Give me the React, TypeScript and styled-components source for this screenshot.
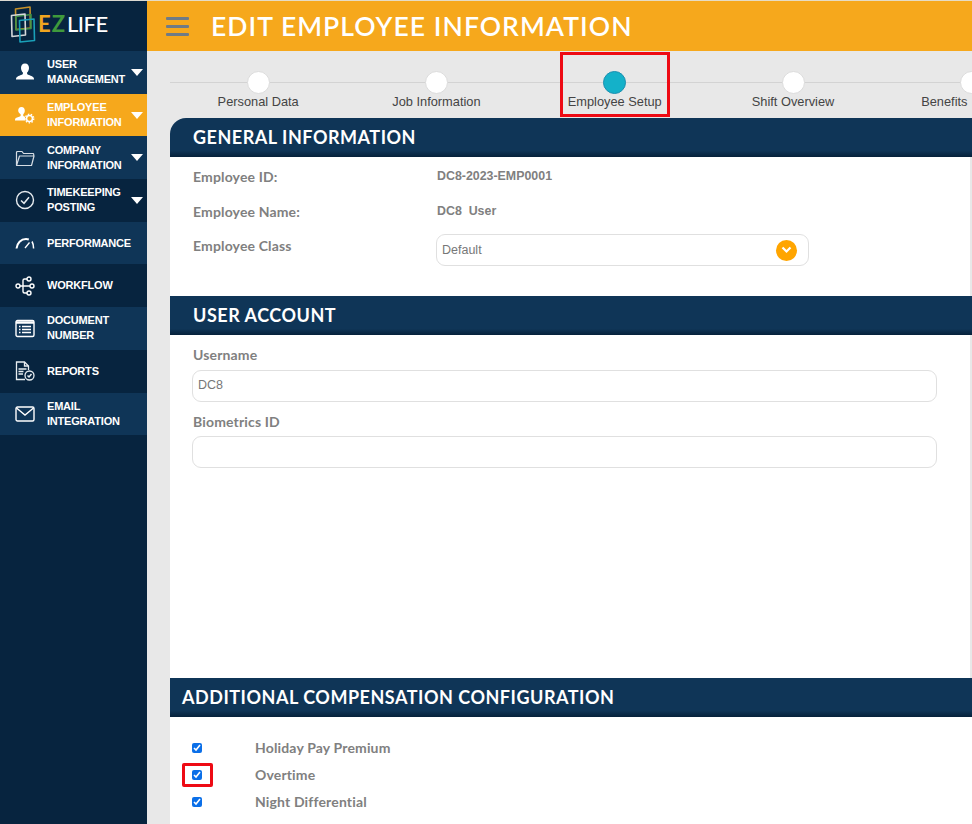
import React from "react";
import styled, { createGlobalStyle } from "styled-components";

const Global = createGlobalStyle`
  html, body { margin: 0; padding: 0; background: #e8e8e8; }
  * { box-sizing: border-box; }
`;

const Page = styled.div`
  display: flex;
  width: 972px;
  height: 824px;
  overflow: hidden;
  font-family: "Liberation Sans", Arial, sans-serif;
`;

const Sidebar = styled.aside`
  width: 147px;
  flex: none;
  background: #07243f;
  display: flex;
  flex-direction: column;
`;

const LogoBox = styled.div`
  height: 51px;
  display: flex;
  align-items: center;
  padding-left: 10px;
  gap: 1px;
  border-top: 1px solid #dcdad2;
`;

const LogoText = styled.div`
  font-family: "Lato", sans-serif;
  font-size: 22px;
  font-weight: 500;
  line-height: 24px;
  letter-spacing: -0.5px;
  color: #fff;
  margin-top: -4px;
`;
const LogoE = styled.span`
  color: #f0a51f;
  font-weight: 700;
  letter-spacing: 1px;
`;
const LogoZ = styled.span`
  color: #3f9a3c;
  font-weight: 700;
  letter-spacing: 2px;
`;

const NavItem = styled.div<{ $tone: "light" | "dark" | "active" }>`
  height: 42.7px;
  display: flex;
  align-items: center;
  padding-left: 14px;
  background: ${(p) => (p.$tone === "active" ? "#f6a81c" : p.$tone === "light" ? "#0f3557" : "#07243f")};
`;

const NavIcon = styled.div`
  width: 21px;
  height: 22px;
  flex: none;
  display: flex;
  align-items: center;
  justify-content: center;
  color: #fff;
`;

const NavLabel = styled.div`
  margin-left: 12px;
  width: 84px;
  flex: none;
  color: #fff;
  font-size: 11px;
  font-weight: 700;
  line-height: 15px;
  letter-spacing: -0.2px;
  text-transform: uppercase;
`;

const Caret = styled.div`
  width: 0;
  height: 0;
  flex: none;
  border-left: 6.5px solid transparent;
  border-right: 6.5px solid transparent;
  border-top: 7px solid #fff;
`;

const Main = styled.main`
  flex: 1;
  min-width: 0;
  display: flex;
  flex-direction: column;
`;

const Header = styled.header`
  height: 51px;
  flex: none;
  background: #f6a81c;
  border-top: 1px solid #e6dcc4;
  display: flex;
  align-items: center;
  padding-left: 19px;
`;

const Burger = styled.div`
  width: 23px;
  display: flex;
  flex-direction: column;
  gap: 5px;
  span {
    display: block;
    height: 3px;
    background: #6f7b86;
    border-radius: 1px;
  }
`;

const Title = styled.h1`
  margin: 0 0 0 22px;
  font-family: "Lato", sans-serif;
  font-size: 26.5px;
  font-weight: 600;
  letter-spacing: 1.05px;
  color: #fff;
  white-space: nowrap;
`;

const Stepper = styled.div`
  height: 67px;
  flex: none;
  display: flex;
  margin-left: 22px;
  position: relative;
  &::before {
    content: "";
    position: absolute;
    left: 1px;
    right: 0;
    top: 31px;
    height: 1px;
    background: #d3d3d3;
  }
`;

const Step = styled.div`
  width: 178.3px;
  flex: none;
  position: relative;
  display: flex;
  flex-direction: column;
  align-items: center;
  padding-top: 20px;
`;

const Dot = styled.div<{ $active?: boolean }>`
  width: 23px;
  height: 23px;
  border-radius: 50%;
  position: relative;
  background: ${(p) => (p.$active ? "#14b1c9" : "#fff")};
  border: 1px solid ${(p) => (p.$active ? "#1c8fb0" : "#dcdcdc")};
`;

const StepLabel = styled.div<{ $shift?: number }>`
  font-size: 12.8px;
  line-height: 15px;
  color: #444;
  white-space: nowrap;
  margin-right: ${(p) => p.$shift ?? 0}px;
`;

const Highlight = styled.div`
  position: absolute;
  left: 34px;
  top: 1px;
  width: 110px;
  height: 65px;
  border: 3px solid #ee0a14;
`;

const Card = styled.section`
  flex: 1;
  margin-left: 23px;
  background: #fff;
  border-top-left-radius: 16px;
  overflow: hidden;
  min-height: 0;
`;

const Bar = styled.div<{ $inset?: number }>`
  height: 39px;
  background: linear-gradient(#0f3557 0, #0f3557 84%, #06213a 100%);
  color: #fff;
  font-family: "Lato", sans-serif;
  font-size: 18px;
  font-weight: 700;
  letter-spacing: 0.52px;
  line-height: 39px;
  padding-left: ${(p) => p.$inset ?? 23}px;
  white-space: nowrap;
`;

const GeneralBody = styled.div`
  height: 139px;
  padding: 12px 0 0 23px;
  border-right: 2px solid #e8e8e8;
  display: grid;
  grid-template-columns: 244px 372px;
  grid-template-rows: 35px 34px 33px;
  align-items: start;
`;

const FieldLabel = styled.div`
  font-family: "Lato", sans-serif;
  font-size: 14px;
  font-weight: 700;
  letter-spacing: 0.15px;
  color: #808080;
  line-height: 16px;
`;

const Value = styled.div`
  font-size: 12.4px;
  font-weight: 700;
  color: #808080;
  line-height: 14px;
  white-space: pre;
`;

const SelectBox = styled.div`
  height: 32px;
  border: 1.5px solid #e0e0e0;
  border-radius: 9px;
  display: flex;
  align-items: center;
  justify-content: space-between;
  padding: 0 11px 0 5px;
  font-size: 12.5px;
  color: #777;
  margin-top: -4px;
  margin-left: -1px;
`;

const Chevron = styled.div`
  width: 21px;
  height: 21px;
  border-radius: 50%;
  background: #ffa500;
  display: flex;
  align-items: center;
  justify-content: center;
`;

const AccountBody = styled.div`
  height: 343px;
  padding: 12px 33px 0 22px;
  border-right: 2px solid #e8e8e8;
  display: flex;
  flex-direction: column;
`;

const AccountLabel = styled(FieldLabel)<{ $h: number }>`
  margin-left: 1px;
  height: ${(p) => p.$h}px;
`;

const TextBox = styled.div`
  height: 32px;
  flex: none;
  border: 1.5px solid #e0e0e0;
  border-radius: 9px;
  padding-left: 5px;
  font-size: 12.5px;
  line-height: 29px;
  color: #777;
  margin-bottom: 12px;
`;

const Checks = styled.div`
  padding: 17px 0 0 22px;
  display: flex;
  flex-direction: column;
`;

const CheckRow = styled.label`
  height: 27px;
  display: flex;
  align-items: center;
`;

const CheckCell = styled.div`
  width: 63px;
  flex: none;
  position: relative;
  display: flex;
  align-items: center;
`;

const Check = styled.input`
  width: 10px;
  height: 10px;
  margin: 0;
  accent-color: #0b6fe8;
`;

const CheckMark = styled.div`
  position: absolute;
  left: -10px;
  top: -7px;
  width: 31px;
  height: 24px;
  border: 3px solid #ee0a14;
  border-radius: 2px;
`;

const Svg = styled.svg`
  display: block;
`;

const LogoMark = styled(Svg)`
  margin-top: -3px;
`;

const icons: Record<string, React.ReactNode> = {
  user: (
    <Svg width="20" height="20" viewBox="0 0 20 20" fill="#fff">
      <path d="M10 1.5c2.600 0 4 2 4 4.400 0 1.900-.8 3.500-1.900 4.600v1.300c0 1 3.200 1.600 5.200 2.600 1 .5 1.700 1.200 1.700 2.600v.5H1v-.5c0-1.400.7-2.100 1.700-2.600 2-1 5.200-1.600 5.200-2.600v-1.300C6.800 9.400 6 7.800 6 5.900c0-2.400 1.400-4.400 4-4.400z" />
    </Svg>
  ),
  employee: (
    <Svg width="21" height="20" viewBox="0 0 21 20" fill="#fff">
      <path d="M7.500 2c2.200 0 3.300 1.700 3.300 3.600 0 1.600-.7 2.900-1.600 3.800v1c0 .6 1 1 2 1.400-.5 1.300-.3 2.600.5 3.700H1v-.6c0-1.200.6-1.800 1.400-2.200 1.700-.8 4.300-1.300 4.300-2.300v-1C5.400 8.500 4.200 7.200 4.200 5.600 4.200 3.700 5.300 2 7.500 2z" />
      <circle cx="15.500" cy="13.500" r="3" fill="none" stroke="#fff" strokeWidth="1.600" />
      <circle cx="15.500" cy="13.500" r="4.300" fill="none" stroke="#fff" strokeWidth="1.300" strokeDasharray="1.500 1.500" />
    </Svg>
  ),
  folder: (
    <Svg width="20" height="18" viewBox="0 0 20 18" fill="none" stroke="#d6dde4" strokeWidth="1.200" strokeLinejoin="round">
      <path d="M1.500 16V3.500c0-.6.400-1 1-1h4.500l1.500 2H18c.4 0 .7.300.7.700V7" />
      <path d="M1.500 16.500h15l2.500-9.500H4.500z" />
    </Svg>
  ),
  check: (
    <Svg width="20" height="20" viewBox="0 0 20 20" fill="none" stroke="#e6ebef" strokeWidth="1.400">
      <circle cx="10" cy="10" r="8.500" />
      <path d="M6 10.500l3 2.800 5-6" strokeWidth="1.500" />
    </Svg>
  ),
  gauge: (
    <Svg width="20" height="14" viewBox="0 0 20 14" fill="none" stroke="#fff" strokeWidth="2">
      <path d="M1.500 12.500C2 7 6 3 11 3c1.200 0 2 .2 2.800.5" />
      <path d="M17 5.500c1 1.700 1.600 4 1.600 7" strokeWidth="1.500" />
      <path d="M10 12l4.500-5.500" strokeWidth="1.300" />
    </Svg>
  ),
  workflow: (
    <Svg width="20" height="20" viewBox="0 0 20 20" fill="none" stroke="#fff" strokeWidth="1.400">
      <circle cx="3" cy="10" r="2" />
      <circle cx="14" cy="3" r="2" />
      <circle cx="17" cy="10" r="2" />
      <circle cx="14" cy="17" r="2" />
      <path d="M5 10h10M12 3H9.500C8.500 3 8 3.500 8 4.500v11c0 1 .5 1.500 1.500 1.500H12" />
    </Svg>
  ),
  doc: (
    <Svg width="20" height="19" viewBox="0 0 20 19" fill="none" stroke="#fff">
      <rect x="1" y="1.500" width="18" height="16" rx="1.500" strokeWidth="1.400" />
      <path d="M1 3.500h18" strokeWidth="2.500" />
      <path d="M7 7.500h9M7 10.500h9M7 13.500h9M4 7.500h1.500M4 10.500h1.500M4 13.500h1.500" strokeWidth="1.300" />
    </Svg>
  ),
  report: (
    <Svg width="20" height="20" viewBox="0 0 20 20" fill="none" stroke="#e8edf1" strokeWidth="1.300">
      <path d="M10 18.500H1.500V1h8l4 4v4" />
      <path d="M9.500 1v4h4" />
      <path d="M3.500 8h8M3.500 10.500h5M3.500 13h4.500" strokeWidth="1.600" />
      <circle cx="14.500" cy="14.500" r="4.500" />
      <path d="M12.500 14.500l1.500 1.500 2.500-3" strokeWidth="1.500" />
    </Svg>
  ),
  mail: (
    <Svg width="20" height="16" viewBox="0 0 20 16" fill="none" stroke="#fff" strokeWidth="1.400">
      <rect x="1" y="1" width="18" height="14" rx="1.500" />
      <path d="M1.500 2l8.500 7 8.500-7" />
    </Svg>
  ),
};

const navItems: { icon: string; label: string[]; tone: "light" | "dark" | "active"; caret?: boolean }[] = [
  { icon: "user", label: ["User", "Management"], tone: "light", caret: true },
  { icon: "employee", label: ["Employee", "Information"], tone: "active", caret: true },
  { icon: "folder", label: ["Company", "Information"], tone: "light", caret: true },
  { icon: "check", label: ["Timekeeping", "Posting"], tone: "dark", caret: true },
  { icon: "gauge", label: ["Performance"], tone: "light" },
  { icon: "workflow", label: ["Workflow"], tone: "dark" },
  { icon: "doc", label: ["Document", "Number"], tone: "light" },
  { icon: "report", label: ["Reports"], tone: "dark" },
  { icon: "mail", label: ["Email", "Integration"], tone: "light" },
];

const steps = ["Personal Data", "Job Information", "Employee Setup", "Shift Overview", "Benefits"];
const checks = ["Holiday Pay Premium", "Overtime", "Night Differential"];

const Logo = () => (
  <LogoMark width="27" height="38" viewBox="0 0 27 38" fill="none" strokeWidth="1.600" strokeLinejoin="round">
    <path d="M5.500 3L20 1l.5 21L6 23.500z" stroke="#c7922a" />
    <path d="M6 10.500l15-2v14L6 24z" stroke="#3d8f48" />
    <path d="M1.500 9.500L15 8l.5 21L2 30.500z" stroke="#d5d8da" />
    <path d="M9.500 14.500L24 13l.5 21.500L10 36z" stroke="#1aa0b8" />
  </LogoMark>
);

export default function App() {
  return (
    <>
      <Global />
      <Page>
        <Sidebar>
          <LogoBox>
            <Logo />
            <LogoText>
              <LogoE>E</LogoE>
              <LogoZ>Z</LogoZ>
              LIFE
            </LogoText>
          </LogoBox>
          {navItems.map((n) => (
            <NavItem key={n.label.join()} $tone={n.tone}>
              <NavIcon>{icons[n.icon]}</NavIcon>
              <NavLabel>
                {n.label.map((l) => (
                  <div key={l}>{l}</div>
                ))}
              </NavLabel>
              {n.caret && <Caret />}
            </NavItem>
          ))}
        </Sidebar>
        <Main>
          <Header>
            <Burger>
              <span />
              <span />
              <span />
            </Burger>
            <Title>EDIT EMPLOYEE INFORMATION</Title>
          </Header>
          <Stepper>
            {steps.map((s, i) => (
              <Step key={s}>
                <Dot $active={i === 2} />
                <StepLabel $shift={i === 4 ? 54 : 0}>{s}</StepLabel>
                {i === 2 && <Highlight />}
              </Step>
            ))}
          </Stepper>
          <Card>
            <Bar>GENERAL INFORMATION</Bar>
            <GeneralBody>
              <FieldLabel>Employee ID:</FieldLabel>
              <Value>DC8-2023-EMP0001</Value>
              <FieldLabel>Employee Name:</FieldLabel>
              <Value>DC8  User</Value>
              <FieldLabel>Employee Class</FieldLabel>
              <SelectBox>
                Default
                <Chevron>
                  <Svg width="11" height="8" viewBox="0 0 11 8" fill="none" stroke="#fff" strokeWidth="2.200">
                    <path d="M1.500 1.500l4 4 4-4" />
                  </Svg>
                </Chevron>
              </SelectBox>
            </GeneralBody>
            <Bar>USER ACCOUNT</Bar>
            <AccountBody>
              <AccountLabel $h={23}>Username</AccountLabel>
              <TextBox>DC8</TextBox>
              <AccountLabel $h={22}>Biometrics ID</AccountLabel>
              <TextBox />
            </AccountBody>
            <Bar $inset={12}>ADDITIONAL COMPENSATION CONFIGURATION</Bar>
            <Checks>
              {checks.map((c, i) => (
                <CheckRow key={c}>
                  <CheckCell>
                    <Check type="checkbox" defaultChecked />
                    {i === 1 && <CheckMark />}
                  </CheckCell>
                  <FieldLabel>{c}</FieldLabel>
                </CheckRow>
              ))}
            </Checks>
          </Card>
        </Main>
      </Page>
    </>
  );
}
